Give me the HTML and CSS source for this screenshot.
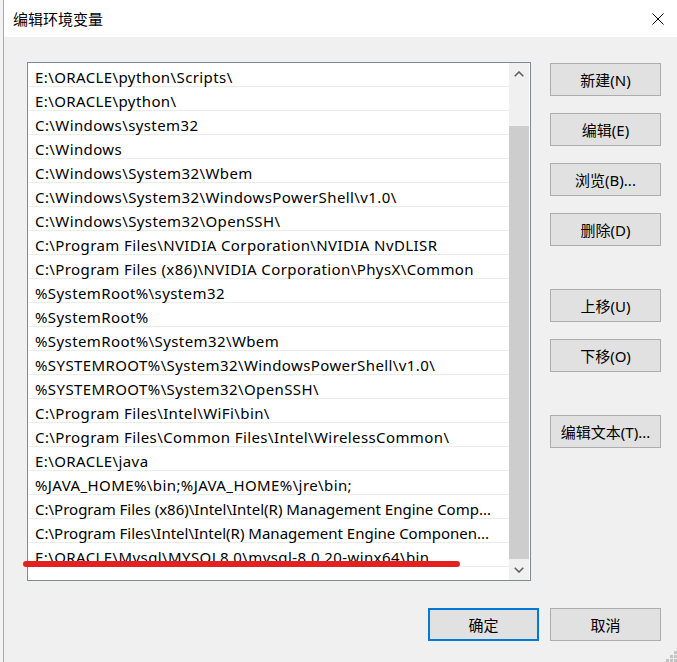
FILE: index.html
```html
<!DOCTYPE html>
<html>

<head>
    <title>编辑环境变量</title>
    <meta charset="utf-8">
    <link rel="stylesheet" href="styles.css">
</head>

<body>
    <div id="screen">
        <div id="behind"></div>
        <div id="dialog">
            <div id="titlebar">
                <span class="title">编辑环境变量</span>
                <svg class="close" width="12" height="12" viewBox="0 0 12 12">
                    <path d="M0.5 0.5 L11.5 11.5 M11.5 0.5 L0.5 11.5" stroke="#000" stroke-width="1" fill="none" />
                </svg>
            </div>

            <div id="content">
                <div id="main">
                    <div id="listbox">
                        <div class="rows">
                            <div class="row">E:\ORACLE\python\Scripts\</div>
                            <div class="row">E:\ORACLE\python\</div>
                            <div class="row">C:\Windows\system32</div>
                            <div class="row">C:\Windows</div>
                            <div class="row">C:\Windows\System32\Wbem</div>
                            <div class="row">C:\Windows\System32\WindowsPowerShell\v1.0\</div>
                            <div class="row">C:\Windows\System32\OpenSSH\</div>
                            <div class="row">C:\Program Files\NVIDIA Corporation\NVIDIA NvDLISR</div>
                            <div class="row">C:\Program Files (x86)\NVIDIA Corporation\PhysX\Common</div>
                            <div class="row">%SystemRoot%\system32</div>
                            <div class="row">%SystemRoot%</div>
                            <div class="row">%SystemRoot%\System32\Wbem</div>
                            <div class="row">%SYSTEMROOT%\System32\WindowsPowerShell\v1.0\</div>
                            <div class="row">%SYSTEMROOT%\System32\OpenSSH\</div>
                            <div class="row">C:\Program Files\Intel\WiFi\bin\</div>
                            <div class="row">C:\Program Files\Common Files\Intel\WirelessCommon\</div>
                            <div class="row">E:\ORACLE\java</div>
                            <div class="row">%JAVA_HOME%\bin;%JAVA_HOME%\jre\bin;</div>
                            <div class="row row-cut">C:\Program Files (x86)\Intel\Intel(R) Management Engine Comp...</div>
                            <div class="row row-cut">C:\Program Files\Intel\Intel(R) Management Engine Componen...</div>
                            <div class="row">E:\ORACLE\Mysql\MYSQL8.0\mysql-8.0.20-winx64\bin</div>
                        </div>
                        <div class="scrollbar">
                            <div class="arrow">
                                <svg width="10" height="6" viewBox="0 0 10 6"><path d="M0.7 5.3 L5 1 L9.3 5.3" stroke="#606060" stroke-width="1.6" fill="none" /></svg>
                            </div>
                            <div class="track"><div class="thumb"></div></div>
                            <div class="arrow">
                                <svg width="10" height="6" viewBox="0 0 10 6"><path d="M0.7 0.7 L5 5 L9.3 0.7" stroke="#606060" stroke-width="1.6" fill="none" /></svg>
                            </div>
                        </div>
                        <div class="mark"></div>
                    </div>

                    <div id="side">
                        <div class="group">
                            <button class="btn">新建(N)</button>
                            <button class="btn">编辑(E)</button>
                            <button class="btn">浏览(B)...</button>
                            <button class="btn">删除(D)</button>
                        </div>
                        <div class="group">
                            <button class="btn">上移(U)</button>
                            <button class="btn">下移(O)</button>
                        </div>
                        <div class="group">
                            <button class="btn">编辑文本(T)...</button>
                        </div>
                    </div>
                </div>

                <div id="footer">
                    <button class="btn btn-default">确定</button>
                    <button class="btn">取消</button>
                </div>
            </div>

            <svg id="grip" width="12" height="12" viewBox="0 0 12 12" fill="#c4c4c4">
                <rect x="9" y="1" width="3" height="3" />
                <rect x="5" y="5" width="3" height="3" />
                <rect x="9" y="5" width="3" height="3" />
                <rect x="1" y="9" width="3" height="3" />
                <rect x="5" y="9" width="3" height="3" />
                <rect x="9" y="9" width="3" height="3" />
            </svg>
        </div>
    </div>
</body>

</html>
```

FILE: styles.css
```css
html, body {
    margin: 0px;
    height: 100%;
    background-color: rgb(240, 240, 240);
    font-family: "Noto Sans", "Noto Sans CJK SC", sans-serif;
    font-size: 15px;
    color: rgb(0, 0, 0);
}
#screen {
    display: flex;
    height: 662px;
    overflow: hidden;
}
#behind {
    width: 3px;
    background-color: rgb(243, 243, 243);
}
#dialog {
    position: relative;
    flex: 1;
    display: flex;
    flex-direction: column;
    border-left: 1px solid rgb(170, 170, 170);
    background-color: rgb(240, 240, 240);
}
#titlebar {
    height: 37px;
    background-color: rgb(255, 255, 255);
    display: flex;
    align-items: center;
    justify-content: space-between;
    padding: 0 13px 0 9px;
}
#titlebar .title {
    font-family: "Noto Sans CJK SC", sans-serif;
    font-size: 15px;
}
#content {
    flex: 1;
    padding: 25px 16px 0 23px;
}
#main {
    display: flex;
    gap: 19px;
}

/* list of paths */
#listbox {
    position: relative;
    width: 504px;
    height: 519px;
    box-sizing: border-box;
    border: 1px solid rgb(130, 135, 144);
    background-color: rgb(255, 255, 255);
    display: flex;
}
.rows {
    flex: 1;
    min-width: 0;
    padding-left: 1px;
}
.row {
    height: 19px;
    padding-top: 4px;
    padding-left: 6px;
    border-bottom: 1px solid rgb(236, 236, 236);
    line-height: 20px;
    letter-spacing: 0.4px;
    white-space: nowrap;
}
.row-cut {
    letter-spacing: 0px;
}
.scrollbar {
    width: 20px;
    margin-right: 1px;
    display: flex;
    flex-direction: column;
    background-color: rgb(240, 240, 240);
}
.scrollbar .arrow {
    height: 21px;
    display: grid;
    place-items: center;
}
.scrollbar .track {
    flex: 1;
    display: flex;
    padding-top: 42px;
}
.scrollbar .thumb {
    flex: 1;
    background-color: rgb(205, 205, 205);
}
.mark {
    position: absolute;
    left: -5px;
    top: 498px;
    width: 437px;
    height: 6px;
    border-radius: 3px;
    background-color: rgb(228, 32, 32);
}

/* buttons */
#side {
    margin-top: 1px;
    display: flex;
    flex-direction: column;
    gap: 43px;
}
#side .group {
    display: flex;
    flex-direction: column;
    gap: 17px;
}
.btn {
    width: 111px;
    height: 33px;
    margin: 0;
    padding: 0;
    border: 1px solid rgb(173, 173, 173);
    background-color: rgb(225, 225, 225);
    font-family: "Noto Sans", "Noto Sans CJK SC", sans-serif;
    font-size: 15px;
    color: rgb(0, 0, 0);
}
.btn-default {
    border: 2px solid rgb(0, 120, 215);
}
#footer {
    margin-top: 27px;
    display: flex;
    justify-content: flex-end;
    gap: 11px;
}
#grip {
    position: absolute;
    right: 0;
    bottom: 0;
}
```
